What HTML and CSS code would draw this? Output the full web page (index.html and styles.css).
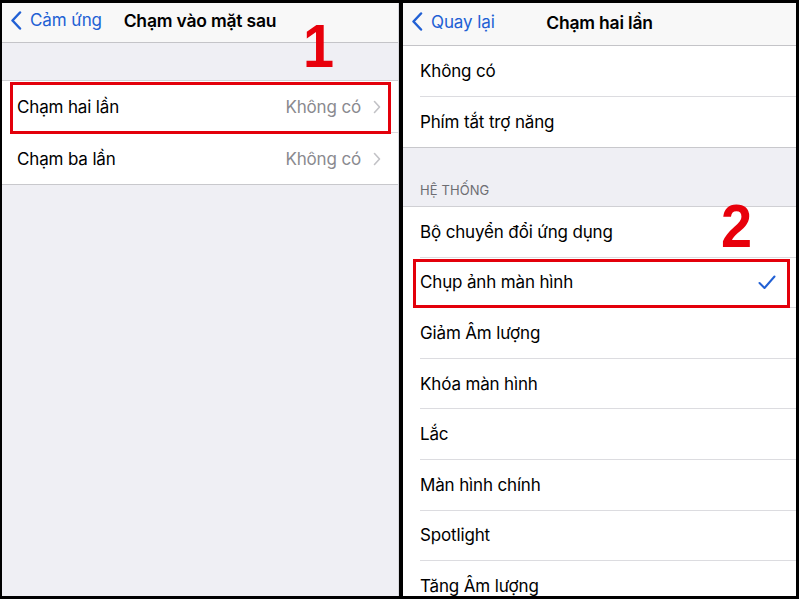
FILE: index.html
```html
<!DOCTYPE html>
<html lang="vi">
<head>
<meta charset="utf-8">
<title>Chạm vào mặt sau</title>
<link rel="stylesheet" href="styles.css">
</head>
<body>
<div class="frame">
  <section class="panel panel-left">
    <header class="nav nav-short">
      <a class="back">
        <svg class="back-icon" viewBox="0 0 12 19" width="12" height="19"><path d="M10 1.5 L2.5 9.5 L10 17.5" fill="none" stroke="currentColor" stroke-width="2.5" stroke-linecap="round" stroke-linejoin="round"/></svg>
        <span>Cảm ứng</span>
      </a>
      <h1 class="nav-title">Chạm vào mặt sau</h1>
    </header>
    <div class="spacer"></div>
    <div class="group">
      <div class="row row-tall marked marked-left">
        <div class="cell">
          <span class="label">Chạm hai lần</span>
          <span class="value">Không có</span>
          <svg class="chev" viewBox="0 0 8 14" width="8" height="14"><path d="M1.5 1.5 L6.5 7 L1.5 12.5" fill="none" stroke="currentColor" stroke-width="1.6" stroke-linecap="round" stroke-linejoin="round"/></svg>
        </div>
      </div>
      <div class="row row-tall">
        <div class="cell">
          <span class="label">Chạm ba lần</span>
          <span class="value">Không có</span>
          <svg class="chev" viewBox="0 0 8 14" width="8" height="14"><path d="M1.5 1.5 L6.5 7 L1.5 12.5" fill="none" stroke="currentColor" stroke-width="1.6" stroke-linecap="round" stroke-linejoin="round"/></svg>
        </div>
      </div>
    </div>
    <div class="step step-1">1</div>
  </section>

  <section class="panel panel-right">
    <header class="nav">
      <a class="back">
        <svg class="back-icon" viewBox="0 0 12 19" width="12" height="19"><path d="M10 1.5 L2.5 9.5 L10 17.5" fill="none" stroke="currentColor" stroke-width="2.5" stroke-linecap="round" stroke-linejoin="round"/></svg>
        <span>Quay lại</span>
      </a>
      <h1 class="nav-title">Chạm hai lần</h1>
    </header>
    <div class="group group-flush">
      <div class="row"><div class="cell"><span class="label">Không có</span></div></div>
      <div class="row"><div class="cell"><span class="label">Phím tắt trợ năng</span></div></div>
    </div>
    <div class="section-head">HỆ THỐNG</div>
    <div class="group group-open">
      <div class="row row-list"><div class="cell"><span class="label">Bộ chuyển đổi ứng dụng</span></div></div>
      <div class="row row-list marked marked-right">
        <div class="cell">
          <span class="label">Chụp ảnh màn hình</span>
          <svg class="check" viewBox="0 0 18 15" width="18" height="15"><path d="M1.5 8 L6.5 13 L16.5 1.5" fill="none" stroke="currentColor" stroke-width="2" stroke-linecap="round" stroke-linejoin="round"/></svg>
        </div>
      </div>
      <div class="row row-list"><div class="cell"><span class="label">Giảm Âm lượng</span></div></div>
      <div class="row row-list"><div class="cell"><span class="label">Khóa màn hình</span></div></div>
      <div class="row row-list"><div class="cell"><span class="label">Lắc</span></div></div>
      <div class="row row-list"><div class="cell"><span class="label">Màn hình chính</span></div></div>
      <div class="row row-list"><div class="cell"><span class="label">Spotlight</span></div></div>
      <div class="row row-list"><div class="cell"><span class="label">Tăng Âm lượng</span></div></div>
    </div>
    <div class="step step-2">2</div>
  </section>
</div>
</body>
</html>
```

FILE: styles.css
```css
* { box-sizing: border-box; }

html, body {
  margin: 0;
  height: 100%;
  background: #000;
}

body {
  padding: 3px 3px 3px 2px;
  font-family: Inter, "Noto Sans", "DejaVu Sans", sans-serif;
  color: #000;
  overflow: hidden;
}

.frame {
  display: flex;
  gap: 4px;
  height: 593px;
}

.panel {
  position: relative;
  overflow: hidden;
  background: #efeff4;
  display: flex;
  flex-direction: column;
}

.panel-left { width: 397px; border-right: 1px solid #d9d9de; }
.panel-right { width: 393px; }

/* navigation bar */
.nav {
  position: relative;
  flex: none;
  height: 43px;
  display: flex;
  align-items: center;
  justify-content: center;
  padding-bottom: 4px;
  background: #f8f8f8;
  border-bottom: 1px solid #c4c4c8;
}

.nav-short { height: 40px; padding-bottom: 5px; }

.back {
  position: absolute;
  left: 8px;
  top: 0;
  bottom: 5px;
  display: flex;
  align-items: center;
  gap: 8px;
  color: #2160d4;
  font-size: 17px;
  letter-spacing: -0.1px;
}

.back-icon { display: block; }

.nav-title {
  margin: 0;
  font-size: 17.5px;
  font-weight: 600;
  letter-spacing: -0.2px;
}

.spacer { height: 37px; flex: none; }

/* grouped table */
.group {
  flex: none;
  background: #fff;
  border-top: 1px solid #d0d0d4;
  border-bottom: 1px solid #c8c8cc;
}

.group-flush { border-top: none; }
.group-open { border-bottom: none; }

.row {
  position: relative;
  padding-left: 17px;
}

.panel-left .row { padding-left: 15px; }

.cell {
  height: 51px;
  display: flex;
  align-items: center;
  padding-right: 17px;
  border-bottom: 1px solid #dcdce0;
}

.row:last-child .cell { border-bottom: none; height: 50px; }

.row-tall .cell { height: 52px; }
.row-tall:last-child .cell { height: 51px; }

.row-list .cell { height: 50.6px; }
.row-list:last-child .cell { height: 50.6px; border-bottom: 1px solid #dcdce0; }

.label {
  flex: 1;
  font-size: 17px;
  letter-spacing: -0.15px;
  white-space: nowrap;
}

.value {
  font-size: 17px;
  color: #8a8a8f;
  letter-spacing: -0.15px;
  margin-right: 12px;
}

.chev { color: #c2c2c6; display: block; }
.check { color: #2160d4; display: block; margin-right: 3px; }

.section-head {
  flex: none;
  height: 58px;
  display: flex;
  align-items: flex-end;
  padding: 0 17px 8px;
  font-size: 13px;
  color: #6d6d72;
  letter-spacing: 0.1px;
}

/* red highlight boxes drawn over the rows */
.marked::after {
  content: "";
  position: absolute;
  border: 3px solid #e3000b;
  pointer-events: none;
}

.marked-left::after { left: 8px; right: 7px; top: 1px; bottom: -1px; }
.marked-right::after { left: 10px; right: 6px; top: 1px; bottom: 0; }

/* step numbers */
.step {
  position: absolute;
  font-family: "Liberation Sans", Arial, sans-serif;
  font-weight: 700;
  font-size: 62px;
  line-height: 1;
  color: #e8000b;
  transform: scaleX(0.9);
  transform-origin: left top;
}

.step-1 { left: 301px; top: 12px; }
.step-2 { left: 318px; top: 192px; }
```
